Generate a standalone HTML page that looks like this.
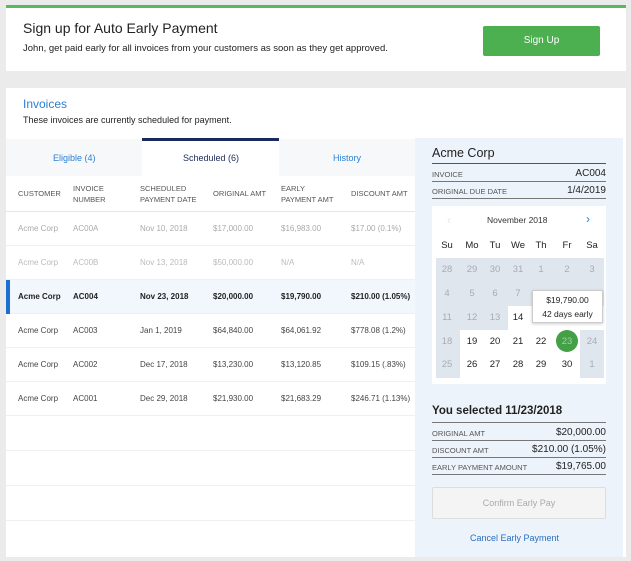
<!DOCTYPE html>
<html><head><style>
*{box-sizing:border-box;margin:0;padding:0}
body{width:631px;height:561px;background:#ebebeb;font-family:"Liberation Sans",sans-serif;position:relative;overflow:hidden;color:#222}
.abs{position:absolute}
.card1{left:6px;top:5px;width:620px;height:66px;background:#fff;border-top:3px solid #5cb85c}
.card2{left:6px;top:88px;width:620px;height:469px;background:#fff}
.t{position:absolute;white-space:nowrap}
.th{font-size:7.5px;color:#555;line-height:11px}
.row{position:absolute;left:6px;width:409px;height:34px;border-bottom:1px solid #f0f0f0;font-size:8px}
.row span{position:absolute;top:12px}
.cal span{position:absolute;font-size:9.5px;width:20px;text-align:center;margin-left:-10px}
.kv{position:absolute;left:432px;width:174px;border-bottom:1.5px solid #777;font-size:7.5px;color:#555}
.kv b{position:absolute;right:0;font-weight:normal;color:#222;font-size:10px;bottom:2px}
</style></head><body>
<div class="abs card1">
<div class="t" style="left:17px;top:12px;font-size:14px">Sign up for Auto Early Payment</div>
<div class="t" style="left:17px;top:35px;font-size:9.5px">John, get paid early for all invoices from your customers as soon as they get approved.</div>
<div class="abs" style="left:477px;top:18px;width:117px;height:30px;background:#4caf50;color:#fff;font-size:10px;text-align:center;line-height:30px;border-radius:2px">Sign Up</div>
</div>
<div class="abs card2"></div>
<div class="t" style="left:23px;top:97px;font-size:12px;color:#2a7fd4">Invoices</div>
<div class="t" style="left:23px;top:115px;font-size:9px">These invoices are currently scheduled for payment.</div>
<div class="abs" style="left:6px;top:139px;width:409px;height:37px;background:#f6f8fa"></div>
<div class="abs" style="left:142px;top:138px;width:137px;height:38px;background:#fff;border-top:3px solid #1a2a5a"></div>
<div class="t" style="left:53px;top:153px;font-size:9px;color:#2a7fd4">Eligible (4)</div>
<div class="t" style="left:183px;top:153px;font-size:9px;color:#1a2a5a">Scheduled (6)</div>
<div class="t" style="left:333px;top:153px;font-size:9px;color:#2a7fd4">History</div>
<div class="abs" style="left:6px;top:211px;width:409px;border-bottom:1px solid #e6e6e6"></div>
<div class="t th" style="left:18px;top:188px">CUSTOMER</div>
<div class="t th" style="left:73px;top:183px">INVOICE<br>NUMBER</div>
<div class="t th" style="left:140px;top:183px">SCHEDULED<br>PAYMENT DATE</div>
<div class="t th" style="left:213px;top:188px">ORIGINAL AMT</div>
<div class="t th" style="left:281px;top:183px">EARLY<br>PAYMENT AMT</div>
<div class="t th" style="left:351px;top:188px">DISCOUNT AMT</div>
<div class="row" style="top:212px;color:#aaa"><span style="left:12px">Acme Corp</span><span style="left:67px">AC00A</span><span style="left:134px">Nov 10, 2018</span><span style="left:207px">$17,000.00</span><span style="left:275px">$16,983.00</span><span style="left:345px">$17.00 (0.1%)</span></div>
<div class="row" style="top:246px;color:#bbb"><span style="left:12px">Acme Corp</span><span style="left:67px">AC00B</span><span style="left:134px">Nov 13, 2018</span><span style="left:207px">$50,000.00</span><span style="left:275px">N/A</span><span style="left:345px">N/A</span></div>
<div class="row" style="top:280px;background:#f1f7fd;font-weight:bold;color:#222"><div class="abs" style="left:0;top:0;width:4px;height:34px;background:#1a6fd1"></div><span style="left:12px">Acme Corp</span><span style="left:67px">AC004</span><span style="left:134px">Nov 23, 2018</span><span style="left:207px">$20,000.00</span><span style="left:275px">$19,790.00</span><span style="left:345px">$210.00 (1.05%)</span></div>
<div class="row" style="top:314px;color:#444"><span style="left:12px">Acme Corp</span><span style="left:67px">AC003</span><span style="left:134px">Jan 1, 2019</span><span style="left:207px">$64,840.00</span><span style="left:275px">$64,061.92</span><span style="left:345px">$778.08 (1.2%)</span></div>
<div class="row" style="top:348px;color:#444"><span style="left:12px">Acme Corp</span><span style="left:67px">AC002</span><span style="left:134px">Dec 17, 2018</span><span style="left:207px">$13,230.00</span><span style="left:275px">$13,120.85</span><span style="left:345px">$109.15 (.83%)</span></div>
<div class="row" style="top:382px;color:#444"><span style="left:12px">Acme Corp</span><span style="left:67px">AC001</span><span style="left:134px">Dec 29, 2018</span><span style="left:207px">$21,930.00</span><span style="left:275px">$21,683.29</span><span style="left:345px">$246.71 (1.13%)</span></div>
<div class="row" style="top:417px"></div><div class="row" style="top:452px"></div><div class="row" style="top:487px"></div>
<div class="abs" style="left:415px;top:138px;width:208px;height:419px;background:#edf3fa"></div>
<div class="t" style="left:432px;top:146px;font-size:12.5px">Acme Corp</div>
<div class="abs" style="left:432px;top:163px;width:174px;border-bottom:1.5px solid #555"></div>
<div class="kv" style="top:166px;height:16px"><span style="position:absolute;bottom:2px">INVOICE</span><b>AC004</b></div>
<div class="kv" style="top:183px;height:16px"><span style="position:absolute;bottom:2px">ORIGINAL DUE DATE</span><b>1/4/2019</b></div>
<div class="abs" style="left:432px;top:206px;width:174px;height:178px;background:#fff"></div>
<div class="t" style="left:487px;top:215px;font-size:8.5px;color:#333">November 2018</div>
<div class="t" style="left:586px;top:212px;font-size:12px;color:#2a7fd4">›</div>
<div class="t" style="left:447px;top:213px;font-size:12px;color:#e6e6e6">‹</div>
<div class="abs" style="left:436px;top:258px;width:168px;height:48px;background:#dfe6ee"></div>
<div class="abs" style="left:436px;top:306px;width:72px;height:24px;background:#dfe6ee"></div>
<div class="abs" style="left:436px;top:330px;width:24px;height:48px;background:#dfe6ee"></div>
<div class="abs" style="left:580px;top:330px;width:24px;height:48px;background:#dfe6ee"></div>
<div class="abs" style="left:556px;top:330px;width:22px;height:22px;border-radius:50%;background:#43a047"></div>
<div class="cal" style="position:absolute;left:0;top:0">
<span style="left:447px;top:240px">Su</span><span style="left:472px;top:240px">Mo</span><span style="left:495px;top:240px">Tu</span><span style="left:518px;top:240px">We</span><span style="left:541px;top:240px">Th</span><span style="left:567px;top:240px">Fr</span><span style="left:592px;top:240px">Sa</span>
</div>
<div class="cal" style="position:absolute;left:0;top:0;color:#aab">
<span style="left:447px;top:264px">28</span><span style="left:472px;top:264px">29</span><span style="left:495px;top:264px">30</span><span style="left:518px;top:264px">31</span><span style="left:541px;top:264px">1</span><span style="left:567px;top:264px">2</span><span style="left:592px;top:264px">3</span>
<span style="left:447px;top:288px">4</span><span style="left:472px;top:288px">5</span><span style="left:495px;top:288px">6</span><span style="left:518px;top:288px">7</span>
<span style="left:447px;top:312px">11</span><span style="left:472px;top:312px">12</span><span style="left:495px;top:312px">13</span>
<span style="left:447px;top:336px">18</span><span style="left:592px;top:336px">24</span>
<span style="left:447px;top:359px">25</span><span style="left:592px;top:359px">1</span>
</div>
<div class="cal" style="position:absolute;left:0;top:0;color:#222">
<span style="left:518px;top:312px">14</span>
<span style="left:472px;top:336px">19</span><span style="left:495px;top:336px">20</span><span style="left:518px;top:336px">21</span><span style="left:541px;top:336px">22</span><span style="left:567px;top:336px;color:#9ed39f">23</span>
<span style="left:472px;top:359px">26</span><span style="left:495px;top:359px">27</span><span style="left:518px;top:359px">28</span><span style="left:541px;top:359px">29</span><span style="left:567px;top:359px">30</span>
</div>
<div class="abs" style="left:532px;top:290px;width:71px;height:33px;background:#fff;border:1px solid #ccc;box-shadow:0 1px 3px rgba(0,0,0,.2);font-size:8.5px;text-align:center;line-height:14px;padding-top:2px">$19,790.00<br>42 days early</div>
<div class="t" style="left:432px;top:405px;font-size:11.5px;font-weight:bold">You selected 11/23/2018</div>
<div class="abs" style="left:432px;top:422px;width:174px;border-bottom:1.5px solid #777"></div>
<div class="kv" style="top:424px;height:17px"><span style="position:absolute;bottom:2px">ORIGINAL AMT</span><b>$20,000.00</b></div>
<div class="kv" style="top:441px;height:17px"><span style="position:absolute;bottom:2px">DISCOUNT AMT</span><b>$210.00 (1.05%)</b></div>
<div class="kv" style="top:458px;height:17px"><span style="position:absolute;bottom:2px">EARLY PAYMENT AMOUNT</span><b>$19,765.00</b></div>
<div class="abs" style="left:432px;top:487px;width:174px;height:32px;background:#f4f4f4;border:1px solid #ddd;border-radius:2px;font-size:9px;color:#aaa;text-align:center;line-height:30px">Confirm Early Pay</div>
<div class="t" style="left:470px;top:533px;font-size:9px;color:#2a6fc0">Cancel Early Payment</div>
</body></html>
